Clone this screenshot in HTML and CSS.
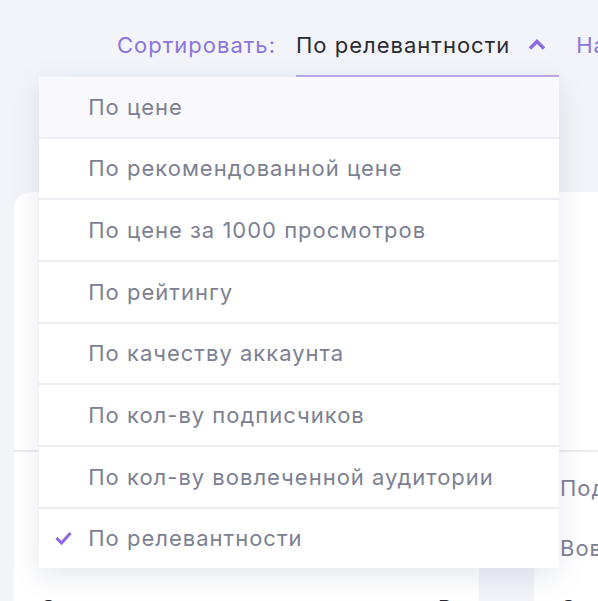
FILE: index.html
```html
<!DOCTYPE html>
<html>
<head>
	<meta charset="utf-8">
	<title>Каталог блогеров</title>
	<link rel="stylesheet" href="styles.css">
</head>
<body>
	<div class="toolbar">
		<span class="sort-label">Сортировать:</span>
		<div class="sort">
			<div class="sort-toggle">
				<span>По релевантности</span>
				<svg class="chevron" width="18" height="12" viewBox="0 0 18 12"><polyline points="2,10.5 9,3.5 16,10.5" fill="none" stroke="#8a6be2" stroke-width="3.4"/></svg>
			</div>
			<ul class="sort-menu">
				<li class="hover"><span class="mark"></span>По цене</li>
				<li><span class="mark"></span>По рекомендованной цене</li>
				<li><span class="mark"></span>По цене за 1000 просмотров</li>
				<li><span class="mark"></span>По рейтингу</li>
				<li><span class="mark"></span>По качеству аккаунта</li>
				<li><span class="mark"></span>По кол-ву подписчиков</li>
				<li><span class="mark"></span>По кол-ву вовлеченной аудитории</li>
				<li class="current"><span class="mark"><svg width="17" height="14" viewBox="0 0 17 14"><polyline points="1.5,7 6.5,12 15.5,2" fill="none" stroke="#8c66e4" stroke-width="3"/></svg></span>По релевантности</li>
			</ul>
		</div>
		<span class="found">Найдено 248 блогеров</span>
	</div>

	<div class="cards">
		<div class="card">
			<div class="card-top"></div>
			<div class="card-row">Подписчики</div>
			<div class="card-row">Вовлеченность</div>
			<div class="card-row dark"><span>Стоимость</span><span>₽</span></div>
		</div>
		<div class="card">
			<div class="card-top"></div>
			<div class="card-row">Подписчики</div>
			<div class="card-row">Вовлеченность</div>
			<div class="card-row dark"><span>Стоимость</span><span>₽</span></div>
		</div>
	</div>
</body>
</html>
```

FILE: styles.css
```css
*{
    margin: 0;
    padding: 0;
    box-sizing: border-box;
}
html,body{
    width: 598px;
    height: 601px;
    overflow: hidden;
}
body{
    background: #f2f4f9;
    font-family: Inter, "Noto Sans", sans-serif;
    font-size: 22px;
    line-height: 28px;
    letter-spacing: 1px;
}

/* sort bar */
.toolbar{
    display: flex;
    align-items: flex-start;
    padding: 31px 0 0 117px;
    white-space: nowrap;
}
.sort-label{
    color: #8b74dc;
    margin-right: 20px;
}
.sort{
    position: relative;
    z-index: 2;
}
.sort-toggle{
    display: flex;
    align-items: center;
    gap: 18px;
    padding: 0 13px 16px 0;
    border-bottom: 2px solid #b9aae8;
    color: #2a2a33;
}
.chevron{
    margin-top: -2px;
}
.found{
    color: #8b74dc;
    margin-left: 17px;
}

/* dropdown */
.sort-menu{
    position: absolute;
    top: 100%;
    right: 0;
    width: 520px;
    list-style: none;
    background: #fff;
    box-shadow: 0 8px 26px rgba(96, 106, 140, 0.16);
}
.sort-menu li{
    display: flex;
    align-items: center;
    height: 59.67px;
    padding-left: 16px;
    color: #7c8093;
    box-sizing: content-box;
}
.sort-menu li + li{
    border-top: 2px solid #ececf1;
}
.sort-menu li.hover{
    background: #f9f9fd;
}
.sort-menu .mark{
    display: flex;
    width: 17px;
    margin-right: 16px;
}

/* blogger cards */
.cards{
    display: flex;
    gap: 55px;
    margin: 115px 0 0 14px;
}
.card{
    flex: 0 0 465px;
    background: #fff;
    border-radius: 16px 16px 0 0;
    padding-bottom: 40px;
}
.card-top{
    height: 260px;
    border-bottom: 2px solid #ececf1;
}
.card-row{
    display: flex;
    justify-content: space-between;
    height: 60px;
    padding: 22px 26px 0;
    color: #7c8093;
}
.card-row:first-of-type{
    padding-top: 26px;
}
.card-row.dark{
    color: #2a2a33;
}
```
